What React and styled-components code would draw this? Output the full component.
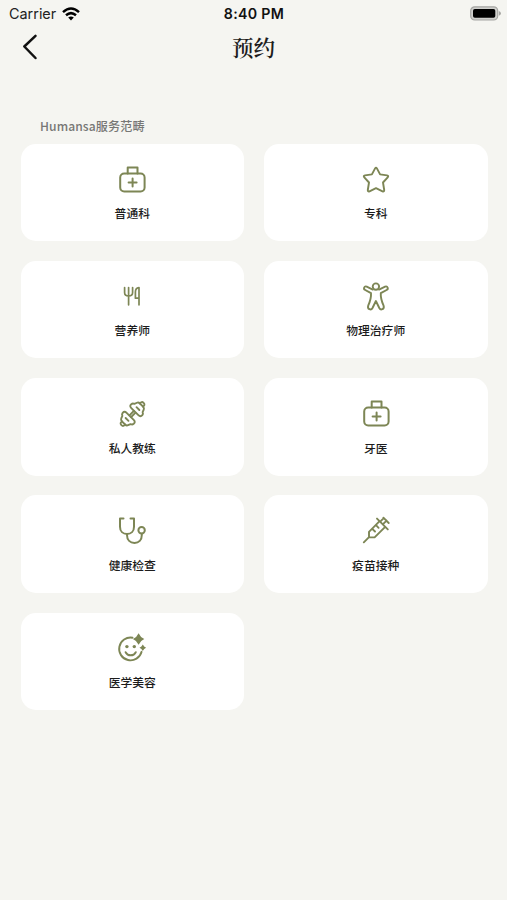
import React from "react";
import styled, { createGlobalStyle } from "styled-components";

const GlobalStyle = createGlobalStyle`
	* {
		box-sizing: border-box;
	}
	body {
		margin: 0;
		background-color: #f5f5f1;
		font-family: "Noto Sans CJK SC", sans-serif;
	}
`;

const Screen = styled.div`
	min-height: 900px;
	display: flex;
	flex-direction: column;
	background-color: #f5f5f1;
`;

const StatusBar = styled.div`
	height: 27px;
	padding: 0 6px 0 9px;
	display: grid;
	grid-template-columns: 1fr auto 1fr;
	align-items: center;
	font-family: Inter, sans-serif;
	font-size: 14.4px;
	color: #222;
`;

const Carrier = styled.div`
	display: flex;
	align-items: center;
	gap: 6px;
`;

const Time = styled.div`
	margin-right: 2px;
	font-weight: 600;
	font-size: 14.2px;
	letter-spacing: 0.3px;
	color: #111;
`;

const BatteryIcon = styled.svg`
	justify-self: end;
	margin-bottom: 1px;
`;

const Header = styled.header`
	height: 39px;
	padding: 0 22px;
	display: grid;
	grid-template-columns: 1fr auto 1fr;
	align-items: center;
`;

const BackButton = styled.button`
	width: 16px;
	height: 28px;
	padding: 0;
	border: none;
	background: none;
	display: flex;
`;

const Title = styled.h1`
	margin: 0;
	font-family: "Noto Serif CJK SC", "Noto Serif SC", "Noto Sans CJK SC", serif;
	font-size: 21.5px;
	line-height: 28px;
	font-weight: 600;
	color: #1c1c1c;
`;

const Content = styled.main`
	padding: 50.5px 19.5px 0 20.5px;
`;

const SectionTitle = styled.p`
	margin: 0 0 9.1px 19.5px;
	font-size: 12.1px;
	line-height: 18px;
	letter-spacing: 0.1px;
	font-weight: 500;
	color: #777775;
`;

const Grid = styled.div`
	display: grid;
	grid-template-columns: 1fr 1fr;
	grid-auto-rows: 97.5px;
	gap: 19.8px;
`;

const Card = styled.div`
	padding-top: 20px;
	display: flex;
	flex-direction: column;
	align-items: center;
	border-radius: 15px;
	background-color: white;
`;

const Icon = styled.svg`
	width: 32px;
	height: 32px;
	fill: none;
	stroke: #7d8655;
	stroke-width: ${(props) => props.$stroke || 2};
	stroke-linecap: round;
	stroke-linejoin: round;
`;

const Label = styled.span`
	margin-top: 8.6px;
	font-size: 11.8px;
	line-height: 18px;
	font-weight: 500;
	color: #1c1c1c;
`;

const MedicalBag = () => (
	<Icon viewBox="0 0 32 32">
		<rect x="4.2" y="9.6" width="24.4" height="17.8" rx="4" />
		<path d="M11.7 9.5V3.5h9.8v6M16.6 14.5v8M12.6 18.5h8" />
	</Icon>
);

const Star = () => (
	<Icon viewBox="0 0 32 32" $stroke={1.9}>
		<path d="M15.1 4.4Q16 2.8 16.9 4.4L20.1 10.4L27 11.4Q29 11.9 27.7 13.3L23 18.5L24.2 26Q24.3 28 22.5 27.3L16 24.1L9.5 27.3Q7.7 28 7.8 26L9 18.5L4.3 13.3Q3 11.9 5 11.4L11.9 10.4Z" />
	</Icon>
);

const Cutlery = () => (
	<Icon viewBox="0 0 32 32" $stroke={1.7}>
		<path d="M8.6 6.6v4.8q0 3.5 4 3.5t4-3.5V6.6M12.6 6.6v17.2" />
		<path d="M23 23.8V6.6Q19.4 7 19.4 11v6.2H23" />
	</Icon>
);

const Body = () => (
	<Icon viewBox="0 0 32 32" $stroke={1.9}>
		<circle cx="15.9" cy="5.6" r="3.2" />
		<path d="M12.8 8.6L6.7 5.6C4.2 4.6 3 7.9 5.2 9L11 12.2C11.3 16 10.4 19.6 8.2 24.7C7.1 28.3 11.1 29.6 12.5 27L15.9 20L19.3 27C20.7 29.6 24.7 28.3 23.6 24.7C21.4 19.6 20.5 16 20.8 12.2L26.6 9C28.8 7.9 27.6 4.6 25.1 5.6L19 8.6" />
	</Icon>
);

const Dumbbell = () => (
	<Icon viewBox="0 0 32 32" $stroke={1.9}>
		<g transform="rotate(-45 16.5 16)">
			<path d="M13.4 14.8h6.2M13.4 17.2h6.2" />
			<path d="M13.2 11V21Q13.2 24 10.4 23.8Q8.6 23.6 8 21.8L5.4 20.8Q3.8 20.2 3.8 18.2V13.8Q3.8 11.8 5.4 11.2L8 10.2Q8.6 8.4 10.4 8.2Q13.2 8 13.2 11ZM8.8 14v4" />
			<path d="M19.8 11V21Q19.8 24 22.6 23.8Q24.4 23.6 25 21.8L27.6 20.8Q29.2 20.2 29.2 18.2V13.8Q29.2 11.8 27.6 11.2L25 10.2Q24.4 8.4 22.6 8.2Q19.8 8 19.8 11ZM24.2 14v4" />
			<path d="M3.8 13.8Q0.8 13.3 0.8 16T3.8 18.2M29.2 13.8Q32.2 13.3 32.2 16T29.2 18.2" />
		</g>
	</Icon>
);

const Stethoscope = () => (
	<Icon viewBox="0 0 32 32">
		<path d="M7.5 3.5H4v8.2C4 16.5 7 19 11 19s7-2.5 7-7.3V3.5h-3.5" />
		<path d="M11 19v1c0 5 3.2 8 7.5 8s7.3-3 7.3-8v-1.2" />
		<circle cx="25.6" cy="15.3" r="3.2" />
	</Icon>
);

const Syringe = () => (
	<Icon viewBox="0 0 32 32" $stroke={1.9}>
		<path d="M3.8 27.3L9 22.1M9 22.1V16.8L19.6 6.2L25.2 11.8L14.6 22.4H9M17 3.6L27.8 14.4M23 9.2L26.6 5.6M23.4 2.7L28.7 8M20.2 6.6L23 3.8M12.3 13.8L15 16.5M16 10.2L18.6 12.8" />
	</Icon>
);

const Smile = () => (
	<Icon viewBox="0 0 32 32" $stroke={1.9}>
		<path d="M16.5 4.7A11.4 11.4 0 1 0 25.6 18.8M9.6 19.2Q11.2 22.3 14.7 22.3T19.8 19.2" />
		<g fill="#7d8655" stroke="none">
			<circle cx="10.9" cy="13.6" r="1.7" />
			<circle cx="18.3" cy="13.6" r="1.7" />
			<path d="M22.6 0.3Q24.3 4.3 28.3 6Q24.3 7.7 22.6 11.7Q20.9 7.7 16.9 6Q20.9 4.3 22.6 0.3ZM26.8 11.4Q27.9 13.6 30.1 14.7Q27.9 15.8 26.8 18Q25.7 15.8 23.5 14.7Q25.7 13.6 26.8 11.4Z" />
		</g>
	</Icon>
);

const services = [
	{ name: "普通科", icon: MedicalBag },
	{ name: "专科", icon: Star },
	{ name: "营养师", icon: Cutlery },
	{ name: "物理治疗师", icon: Body },
	{ name: "私人教练", icon: Dumbbell },
	{ name: "牙医", icon: MedicalBag },
	{ name: "健康检查", icon: Stethoscope },
	{ name: "疫苗接种", icon: Syringe },
	{ name: "医学美容", icon: Smile },
];

function App() {
	return (
		<Screen>
			<GlobalStyle />
			<StatusBar>
				<Carrier>
					<span>Carrier</span>
					<svg width="18" height="14" viewBox="0 0 18 14" fill="none" stroke="#000" strokeWidth="2.5">
						<path d="M1 5.1Q9-2 17 5.1M4 8.3Q9 4 14 8.3" />
						<path d="M9 13.5L6.2 10.6Q9 8.5 11.8 10.6Z" fill="#000" stroke="none" />
					</svg>
				</Carrier>
				<Time>8:40 PM</Time>
				<BatteryIcon width="31" height="15" viewBox="0 0 31 15">
					<rect x="0.7" y="0.8" width="27" height="13.2" rx="4" fill="#d0d0cd" stroke="#a6a6a3" strokeWidth="1.2" />
					<rect x="3" y="3" width="22.3" height="8.8" rx="1.8" fill="#000" />
					<path d="M28.8 5Q31 6 31 7.4T28.8 9.8Z" fill="#a6a6a3" />
				</BatteryIcon>
			</StatusBar>
			<Header>
				<BackButton aria-label="Back">
					<svg width="16" height="28" viewBox="0 0 16 28" fill="none" stroke="#111" strokeWidth="2.5" strokeLinecap="round" strokeLinejoin="round">
						<path d="M13.5 2.8L2.3 13.5L13.5 25" />
					</svg>
				</BackButton>
				<Title>预约</Title>
			</Header>
			<Content>
				<SectionTitle>Humansa服务范畴</SectionTitle>
				<Grid>
					{services.map((service) => {
						const ServiceIcon = service.icon;
						return (
							<Card key={service.name}>
								<ServiceIcon />
								<Label>{service.name}</Label>
							</Card>
						);
					})}
				</Grid>
			</Content>
		</Screen>
	);
}

export default App;
